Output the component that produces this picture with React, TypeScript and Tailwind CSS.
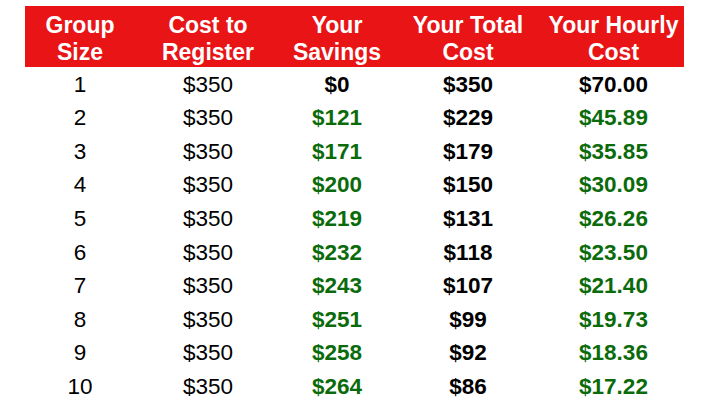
const rows = [
  { size: "1", cost: "$350", savings: "$0", total: "$350", hourly: "$70.00" },
  { size: "2", cost: "$350", savings: "$121", total: "$229", hourly: "$45.89" },
  { size: "3", cost: "$350", savings: "$171", total: "$179", hourly: "$35.85" },
  { size: "4", cost: "$350", savings: "$200", total: "$150", hourly: "$30.09" },
  { size: "5", cost: "$350", savings: "$219", total: "$131", hourly: "$26.26" },
  { size: "6", cost: "$350", savings: "$232", total: "$118", hourly: "$23.50" },
  { size: "7", cost: "$350", savings: "$243", total: "$107", hourly: "$21.40" },
  { size: "8", cost: "$350", savings: "$251", total: "$99", hourly: "$19.73" },
  { size: "9", cost: "$350", savings: "$258", total: "$92", hourly: "$18.36" },
  { size: "10", cost: "$350", savings: "$264", total: "$86", hourly: "$17.22" },
];

const headers = [
  ["Group", "Size"],
  ["Cost to", "Register"],
  ["Your", "Savings"],
  ["Your Total", "Cost"],
  ["Your Hourly", "Cost"],
];

const cols = "grid w-[659px] grid-cols-[110px_146px_112px_150px_141px]";

export default function App() {
  return (
    <div className="h-[400px] w-[720px] overflow-hidden bg-white pl-[25px] pt-[6px] font-['Liberation_Sans',Arial,sans-serif]">
      <div className={`${cols} h-[61px] items-center bg-[#e81416] text-[23px] font-bold leading-[27px] text-white`}>
        {headers.map((h) => (
          <div key={h[0]} className="pt-[4px] text-center">
            <div>{h[0]}</div>
            <div>{h[1]}</div>
          </div>
        ))}
      </div>
      <div className="pt-[1px]">
        {rows.map((r) => {
          const green = r.savings !== "$0";
          return (
            <div key={r.size} className={`${cols} h-[33.6px] items-center text-center text-[22.5px] leading-none text-black`}>
              <div>{r.size}</div>
              <div>{r.cost}</div>
              <div className={`font-bold ${green ? "text-[#0b6b0b]" : "text-black"}`}>{r.savings}</div>
              <div className="font-bold">{r.total}</div>
              <div className={`font-bold ${green ? "text-[#0b6b0b]" : "text-black"}`}>{r.hourly}</div>
            </div>
          );
        })}
      </div>
    </div>
  );
}
